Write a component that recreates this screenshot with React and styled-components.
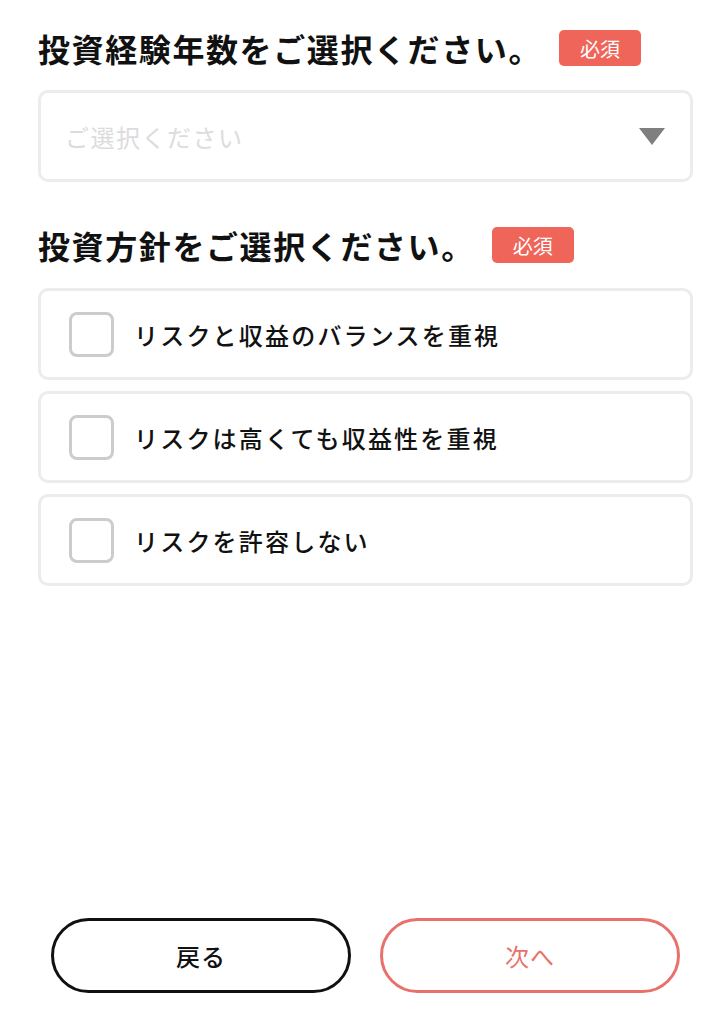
import React from 'react';
import styled, {createGlobalStyle} from 'styled-components';

const GlobalStyle = createGlobalStyle`
  html, body {
    margin: 0;
    padding: 0;
    background: #ffffff;
  }
  body {
    font-family: "Noto Sans CJK JP", "Noto Sans", sans-serif;
    color: #111111;
  }
`;

const Page = styled.div`
  box-sizing: border-box;
  min-height: 1024px;
  padding: 24px 35px 31px 38px;
  display: flex;
  flex-direction: column;
`;

const Section = styled.section`
  display: flex;
  flex-direction: column;
  margin-bottom: ${props => props.spacing || 0}px;
`;

const TitleRow = styled.div`
  display: flex;
  align-items: center;
  height: 48px;
  margin-bottom: ${props => props.gap || 14}px;
`;

const Title = styled.h2`
  margin: 0;
  font-size: 32px;
  font-weight: 700;
  letter-spacing: 1.6px;
  line-height: 1;
  color: #111111;
`;

const Required = styled.span`
  display: inline-flex;
  align-items: center;
  justify-content: center;
  width: 82px;
  height: 36px;
  margin-left: ${props => props.offset || 17}px;
  background: #f0655a;
  border-radius: 5px;
  color: #ffffff;
  font-size: 20px;
  font-weight: 400;
`;

const SelectBox = styled.div`
  box-sizing: border-box;
  height: 92px;
  border: 3px solid #ececec;
  border-radius: 10px;
  display: flex;
  align-items: center;
  justify-content: space-between;
  padding: 0 25px 0 24px;
`;

const Placeholder = styled.span`
  font-size: 24px;
  color: #dcdcdc;
  letter-spacing: 1.5px;
`;

const Arrow = styled.span`
  width: 0;
  height: 0;
  border-left: 13px solid transparent;
  border-right: 13px solid transparent;
  border-top: 17px solid #7f7f7f;
`;

const OptionList = styled.div`
  display: flex;
  flex-direction: column;
  gap: 11px;
`;

const OptionCard = styled.label`
  box-sizing: border-box;
  height: 92px;
  border: 3px solid #ececec;
  border-radius: 10px;
  display: flex;
  align-items: center;
  padding: 0 28px;
  cursor: pointer;
`;

const Box = styled.span`
  box-sizing: border-box;
  width: 45px;
  height: 45px;
  border: 3px solid #cccccc;
  border-radius: 8px;
  flex-shrink: 0;
  margin-right: 20px;
`;

const OptionText = styled.span`
  font-size: 24px;
  font-weight: 500;
  letter-spacing: 2.2px;
  color: #111111;
`;

const Footer = styled.div`
  margin-top: auto;
  display: flex;
  justify-content: space-between;
  padding: 0 13px 0 13px;
`;

const PillButton = styled.button`
  box-sizing: border-box;
  width: 300px;
  height: 75px;
  border-radius: 38px;
  background: #ffffff;
  border: 3px solid ${props => props.accent};
  color: ${props => props.accent};
  font-family: inherit;
  font-size: 24px;
  font-weight: ${props => props.weight || 500};
  letter-spacing: 1px;
  cursor: pointer;
`;

const options = [
  'リスクと収益のバランスを重視',
  'リスクは高くても収益性を重視',
  'リスクを許容しない',
];

export default function App() {
  return (
    <>
      <GlobalStyle />
      <Page>
        <Section spacing={39}>
          <TitleRow gap={18}>
            <Title>投資経験年数をご選択ください。</Title>
            <Required offset={17}>必須</Required>
          </TitleRow>
          <SelectBox>
            <Placeholder>ご選択ください</Placeholder>
            <Arrow />
          </SelectBox>
        </Section>
        <Section>
          <TitleRow gap={19}>
            <Title>投資方針をご選択ください。</Title>
            <Required offset={17}>必須</Required>
          </TitleRow>
          <OptionList>
            {options.map(text => (
              <OptionCard key={text}>
                <Box />
                <OptionText>{text}</OptionText>
              </OptionCard>
            ))}
          </OptionList>
        </Section>
        <Footer>
          <PillButton accent="#111111">戻る</PillButton>
          <PillButton accent="#e8716b" weight={400}>次へ</PillButton>
        </Footer>
      </Page>
    </>
  );
}
